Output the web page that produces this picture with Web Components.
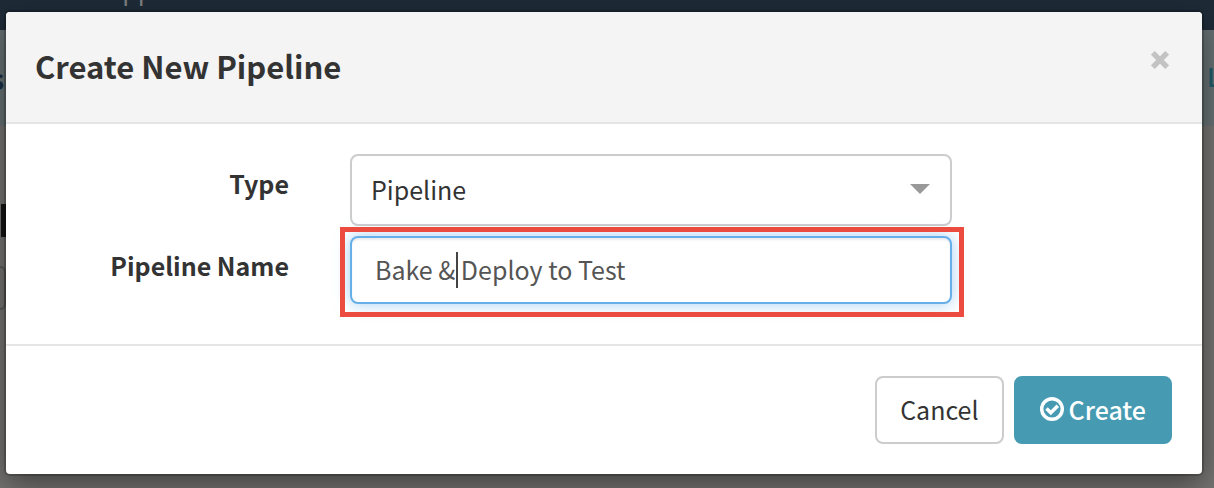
<!DOCTYPE html>
<html lang="en">
<head>
<meta charset="utf-8">
<title>Create New Pipeline</title>
<style>
  html, body { margin: 0; min-height: 100vh; }
  body { display: grid; overflow: hidden; font-family: "Noto Sans CJK SC", "Noto Sans", sans-serif; font-size: 25px; line-height: 36px; color: #333; }
</style>
</head>
<body>
<app-shell>
  <modal-dialog slot="dialog" heading="Create New Pipeline">
    <pipeline-form></pipeline-form>
    <dialog-actions slot="footer"></dialog-actions>
  </modal-dialog>
</app-shell>
<script>
const define = (name, html, setup) => customElements.define(name, class extends HTMLElement {
  connectedCallback() {
    if (this.shadowRoot) return;
    const t = document.createElement('template');
    t.innerHTML = html;
    this.attachShadow({ mode: 'open' }).append(t.content.cloneNode(true));
    if (setup) setup(this, this.shadowRoot);
  }
});

define('app-backdrop', `
<style>
  :host { display: block; overflow: hidden; background: #747372; }
  .bar { height: 30px; background: #1e2b37; overflow: hidden; color: #7d8080; display: flex; align-items: flex-end; }
  .bar span { padding: 0 0 23px 107px; line-height: 36px; }
  .band { height: 96px; background: #667073; display: flex; justify-content: space-between; align-items: center; font-size: 28px; }
  .band span { width: 4px; display: flex; justify-content: flex-end; color: #1b2f42; font-weight: 700; }
  .band .link { width: 7px; color: #1e5a68; justify-content: flex-start; font-weight: 500; font-size: 25px; line-height: 32px; padding-bottom: 4px; }
  .title { margin-top: 78px; margin-left: 1px; width: 8px; height: 33px; background: #151515; }
  .control { margin-top: 29px; margin-left: -20px; width: 22px; height: 40px; border: 2px solid #5a5a5a; border-radius: 6px; }
</style>
<div class="bar"><span>Applications</span></div>
<div class="band"><span>s</span><span class="link">L</span></div>
<div class="title"></div>
<div class="control"></div>`);

define('app-shell', `
<style>
  :host { display: grid; min-width: 0; }
  app-backdrop, ::slotted(*) { grid-area: 1 / 1; min-width: 0; }
  ::slotted(*) { margin: 12px 12px 14px 6px; }
</style>
<app-backdrop></app-backdrop><slot name="dialog"></slot>`);

define('modal-dialog', `
<style>
  :host { display: block; position: relative; align-self: start; background: #fff; border-radius: 4px; box-shadow: 0 0 0 2px rgba(0,0,0,.18), 0 10px 30px rgba(0,0,0,.45); }
  header { display: flex; justify-content: space-between; background: #f4f4f4; border-bottom: 2px solid #e5e5e5; padding: 30px 30px 32px 29px; border-radius: 4px 4px 0 0; }
  h1 { margin: 0; font-size: 31px; line-height: 48px; font-weight: 600; }
  button { align-self: flex-start; border: 0; background: none; padding: 8px 2px; color: #c3c3c3; display: flex; }
  main { padding: 30px 30px 40px; }
  footer { border-top: 2px solid #e5e5e5; padding: 30px; }
</style>
<header><h1></h1><button type="button" aria-label="Close"><svg width="20" height="20" viewBox="0 0 20 20"><path d="M2.800 2.800l14.400 14.400M17.200 2.800l-14.400 14.400" stroke="currentColor" stroke-width="5.400"/></svg></button></header>
<main><slot></slot></main>
<footer><slot name="footer"></slot></footer>`,
(host, root) => { root.querySelector('h1').textContent = host.getAttribute('heading'); });

define('pipeline-form', `
<style>
  :host { display: block; }
  form { display: grid; grid-template-columns: 254fr 662fr 220fr; row-gap: 10px; }
  label { grid-column: 1; text-align: right; font-weight: 700; padding: 11px 1px 0 0; }
  .field { grid-column: 2; margin-left: 60px; position: relative; display: grid; }
  select, input { font: inherit; box-sizing: border-box; width: 100%; min-width: 0; margin: 0; outline: 0; border-radius: 8px; background: #fff; }
  select { appearance: none; height: 72px; border: 2px solid #ccc; padding: 0 19px 2px; color: #333; }
  input { height: 68px; border: 2px solid #66afe9; padding: 0 23px 2px; color: #555; box-shadow: inset 0 2px 2px rgba(0,0,0,.08), 0 0 16px rgba(102,175,233,.6); }
  .arrow { position: absolute; right: 22px; top: 30px; border: 10px solid transparent; border-top-color: #999; border-bottom: 0; pointer-events: none; }
  .ring { position: absolute; inset: -9px -12px -13px -10px; border: 5px solid #ec4b3f; pointer-events: none; }
  .caret { position: absolute; left: 106px; top: 16px; width: 2px; height: 36px; background: #444; pointer-events: none; }
</style>
<form>
  <label for="type">Type</label>
  <div class="field"><select id="type"><option>Pipeline</option></select><i class="arrow"></i></div>
  <label for="name">Pipeline Name</label>
  <div class="field"><input id="name" type="text" value="Bake &amp; Deploy to Test"><i class="caret"></i><i class="ring"></i></div>
</form>`);

define('dialog-actions', `
<style>
  :host { display: flex; justify-content: flex-end; gap: 10px; }
  button { font: inherit; height: 68px; border: 2px solid #ccc; border-radius: 8px; padding: 0 23px 2px; background: #fff; color: #333; display: flex; align-items: center; gap: 6px; }
  .primary { background: #469bb3; border-color: #469bb3; color: #fff; font-weight: 500; padding: 0 24px 2px; gap: 5px; }
</style>
<button type="button">Cancel</button>
<button type="button" class="primary"><svg width="24" height="24" viewBox="0 0 24 24" fill="none" stroke="#fff"><circle cx="12" cy="12" r="10.300" stroke-width="3.400"/><path d="M6.500 11.500l4.300 4.200 7-7" stroke-width="3.600"/></svg>Create</button>`);
</script>
</body>
</html>
